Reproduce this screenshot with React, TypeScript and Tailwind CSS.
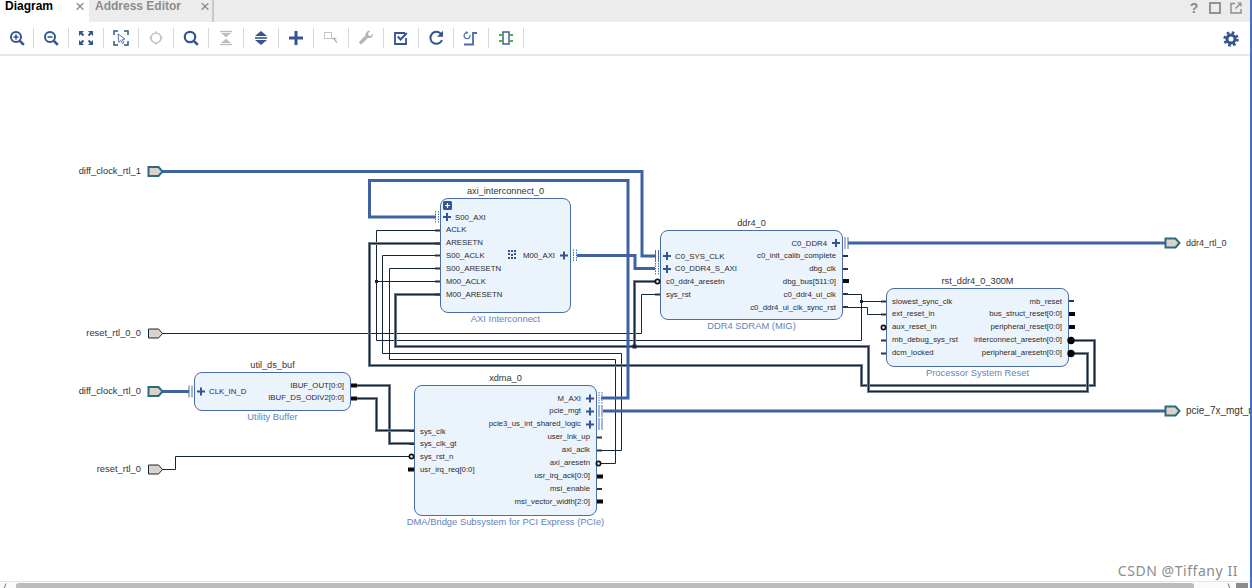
import React from "react";

type Row = { t: string; i?: boolean };
const BLUE = "#34558f";
const WIRE = "#3f62a3";
const DARK = "#14263a";

function Rows({ rows, side, cls }: { rows: Row[]; side: "l" | "r"; cls: string }) {
  return (
    <div className={`flex flex-none flex-col ${side === "r" ? "items-end" : "w-0 items-start"} ${cls}`}>
      {rows.map((r) => (
        <div
          key={r.t}
          className={`h-[12.9px] leading-[13.5px] whitespace-nowrap ${
            side === "l" ? (r.i ? "pl-[14px]" : "pl-[5px]") : r.i ? "pr-[15px]" : "pr-[6px]"
          }`}
        >
          {r.t}
        </div>
      ))}
    </div>
  );
}

function Block(props: {
  cls: string;
  title: string;
  sub: string;
  left: Row[];
  right: Row[];
  lp: string;
  rp: string;
}) {
  return (
    <div
      className={`absolute box-border flex justify-between rounded-[8px] border border-[#4a6ca8] bg-[#ebf3fd] text-[7.8px] text-[#2b2b2b] ${props.cls}`}
    >
      <div className="absolute left-0 right-0 top-[-14px] text-center text-[9.2px] leading-[12px] text-[#333]">
        {props.title}
      </div>
      <Rows rows={props.left} side="l" cls={props.lp} />
      <Rows rows={props.right} side="r" cls={props.rp} />
      <div className="absolute bottom-[-13px] left-[-20px] right-[-20px] text-center text-[9.4px] leading-[12px] text-[#6483bb]">
        {props.sub}
      </div>
    </div>
  );
}

function ExtLabel({ cls, t }: { cls: string; t: string }) {
  return <div className={`absolute whitespace-nowrap leading-[12px] text-[#333] ${cls}`}>{t}</div>;
}

const Bus = ({ d }: { d: string }) => (
  <g fill="none">
    <path d={d} stroke="#77838f" strokeWidth={3} />
    <path d={d} stroke="#14263a" strokeWidth={1.2} />
  </g>
);
const Thin = ({ d }: { d: string }) => <path d={d} fill="none" stroke={DARK} strokeWidth={1} />;
const Intf = ({ d, w = 3 }: { d: string; w?: number }) => <path d={d} fill="none" stroke={WIRE} strokeWidth={w} />;

const Plus = ({ x, y }: { x: number; y: number }) => (
  <path d={`M${x - 4} ${y}h8M${x} ${y - 4}v8`} stroke={BLUE} strokeWidth={2} fill="none" />
);
const Pin = ({ x, y, w = 5 }: { x: number; y: number; w?: number }) => <rect x={x} y={y - 1} width={w} height={2} fill="#333" />;
const BusPin = ({ x, y, w = 6 }: { x: number; y: number; w?: number }) => <rect x={x} y={y - 2} width={w} height={4} fill="#0a0a0a" />;
const Bubble = ({ x, y }: { x: number; y: number }) => (
  <circle cx={x} cy={y} r={2.1} fill="#fff" stroke="#111" strokeWidth={1.7} />
);
const Dot = ({ x, y }: { x: number; y: number }) => <circle cx={x} cy={y} r={3.7} fill="#050505" />;
const Solid = ({ x, y }: { x: number; y: number }) => (
  <path d={`M${x + 0.5} ${y - 6}v12M${x + 3.5} ${y - 6}v12`} stroke="#4a6ca8" strokeWidth={1} fill="none" />
);
const Dotted = ({ x, y }: { x: number; y: number }) => (
  <path
    d={`M${x + 0.5} ${y - 6}v12M${x + 3.5} ${y - 6}v12`}
    stroke="#3f74c0"
    strokeWidth={1}
    strokeDasharray="1.5 1"
    fill="none"
  />
);
const ExtPort = ({ x, y, thick }: { x: number; y: number; thick?: boolean }) => (
  <path
    d={`M${x} ${y - 4.5}h10l4 4.5-4 4.5h-10z`}
    fill="#dcd2cc"
    stroke={thick ? "#2f6b80" : "#14263a"}
    strokeWidth={thick ? 2 : 1}
  />
);

const Ico = ({ children }: { children: React.ReactNode }) => (
  <svg width="16" height="16" viewBox="0 0 16 16" fill="none" strokeLinecap="butt">
    {children}
  </svg>
);

const tools: React.ReactNode[] = [
  <Ico>
    <circle cx="7" cy="7" r="5" stroke={BLUE} strokeWidth="2" />
    <path d="M4.5 7h5M7 4.5v5" stroke={BLUE} strokeWidth="1.6" />
    <path d="M10.8 10.8l4 4" stroke={BLUE} strokeWidth="2.6" />
  </Ico>,
  <Ico>
    <circle cx="7" cy="7" r="5" stroke={BLUE} strokeWidth="2" />
    <path d="M4.5 7h5" stroke={BLUE} strokeWidth="1.6" />
    <path d="M10.8 10.8l4 4" stroke={BLUE} strokeWidth="2.6" />
  </Ico>,
  <Ico>
    <path d="M1 1h5L1 6zM15 1h-5l5 5zM1 15h5l-5-5zM15 15h-5l5-5z" fill={BLUE} />
    <path d="M3 3l2.5 2.5M13 3l-2.5 2.5M3 13l2.5-2.5M13 13l-2.5-2.5" stroke={BLUE} strokeWidth="2" />
  </Ico>,
  <Ico>
    <path d="M1 5V1h4M11 1h4v4M1 11v4h4M11 15h4v-4" stroke={BLUE} strokeWidth="1.5" />
    <path d="M5 4l7 5-2.8.6 1.8 3-1.4.9-1.8-3-2 1.8z" fill="#fff" stroke="#5a74a5" strokeWidth="1" />
  </Ico>,
  <Ico>
    <circle cx="8" cy="8" r="5" stroke="#c4c4c4" strokeWidth="1.6" />
    <path d="M8 1v3M8 12v3M1 8h3M12 8h3" stroke="#c4c4c4" strokeWidth="1.2" />
  </Ico>,
  <Ico>
    <circle cx="7" cy="7" r="5.2" stroke={BLUE} strokeWidth="2.2" />
    <path d="M10.8 10.8l4 4" stroke={BLUE} strokeWidth="2.6" />
  </Ico>,
  <Ico>
    <path d="M2 1.5h12" stroke="#bdbdbd" strokeWidth="1.4" />
    <path d="M3 3h10L8 7.3zM3 13h10L8 8.7z" fill="#bdbdbd" />
    <path d="M2 14.5h12" stroke="#bdbdbd" strokeWidth="1.4" />
  </Ico>,
  <Ico>
    <path d="M8 1l6 5H2zM2 10h12l-6 5z" fill={BLUE} />
    <path d="M2 8h12" stroke={BLUE} strokeWidth="1.6" />
  </Ico>,
  <Ico>
    <path d="M8 1v14M1 8h14" stroke={BLUE} strokeWidth="3" />
  </Ico>,
  <Ico>
    <rect x="1.5" y="2.5" width="7" height="6" stroke="#c4c4c4" strokeWidth="1" />
    <path d="M9 8.5h3.5l-1 1 2.5 3" stroke="#b5b5b5" strokeWidth="1.3" />
  </Ico>,
  <Ico>
    <path
      d="M15 3.6a4 4 0 0 1-5.2 4.3L4.1 13.7a1.7 1.7 0 0 1-2.4-2.4L7.5 5.6A4 4 0 0 1 12.4 1L9.8 3.6l.9 1.8 1.8.8z"
      fill="#b5b5b5"
    />
  </Ico>,
  <Ico>
    <path d="M13 8v6H2V3h10" stroke={BLUE} strokeWidth="1.8" />
    <path d="M4.8 6.5l2.8 3L13.8 3" stroke={BLUE} strokeWidth="2" />
  </Ico>,
  <Ico>
    <path d="M13.2 4.2A6 6 0 1 0 14 10" stroke={BLUE} strokeWidth="2" />
    <path d="M15 0.8v6h-6z" fill={BLUE} />
  </Ico>,
  <Ico>
    <path d="M1 14.5h9V3h4" stroke="#4a6da8" strokeWidth="1.8" />
    <path d="M4 2.6A3 3 0 1 0 7 5" stroke="#4a6da8" strokeWidth="1.2" />
    <path d="M3 1v3.2L5.4 2.6z" fill="#4a6da8" />
  </Ico>,
  <Ico>
    <rect x="5" y="2" width="6" height="12" stroke={BLUE} strokeWidth="1.4" />
    <path d="M1 5h4M11 5h4M1 11h4M11 11h4" stroke="#4caf50" strokeWidth="2" />
  </Ico>,
];

const axiL: Row[] = [
  { t: "S00_AXI", i: true },
  { t: "ACLK" },
  { t: "ARESETN" },
  { t: "S00_ACLK" },
  { t: "S00_ARESETN" },
  { t: "M00_ACLK" },
  { t: "M00_ARESETN" },
];
const ddrL: Row[] = [
  { t: "C0_SYS_CLK", i: true },
  { t: "C0_DDR4_S_AXI", i: true },
  { t: "c0_ddr4_aresetn" },
  { t: "sys_rst" },
];
const ddrR: Row[] = [
  { t: "C0_DDR4", i: true },
  { t: "c0_init_calib_complete" },
  { t: "dbg_clk" },
  { t: "dbg_bus[511:0]" },
  { t: "c0_ddr4_ui_clk" },
  { t: "c0_ddr4_ui_clk_sync_rst" },
];
const rstL: Row[] = [
  { t: "slowest_sync_clk" },
  { t: "ext_reset_in" },
  { t: "aux_reset_in" },
  { t: "mb_debug_sys_rst" },
  { t: "dcm_locked" },
];
const rstR: Row[] = [
  { t: "mb_reset" },
  { t: "bus_struct_reset[0:0]" },
  { t: "peripheral_reset[0:0]" },
  { t: "interconnect_aresetn[0:0]" },
  { t: "peripheral_aresetn[0:0]" },
];
const xdmaL: Row[] = [{ t: "sys_clk" }, { t: "sys_clk_gt" }, { t: "sys_rst_n" }, { t: "usr_irq_req[0:0]" }];
const xdmaR: Row[] = [
  { t: "M_AXI", i: true },
  { t: "pcie_mgt", i: true },
  { t: "pcie3_us_int_shared_logic", i: true },
  { t: "user_lnk_up" },
  { t: "axi_aclk" },
  { t: "axi_aresetn" },
  { t: "usr_irq_ack[0:0]" },
  { t: "msi_enable" },
  { t: "msi_vector_width[2:0]" },
];

export default function App() {
  return (
    <div className="relative box-border flex h-[588px] w-[1252px] flex-col overflow-hidden border-r-2 border-[#4472c4] bg-white [font-family:'Liberation_Sans',sans-serif]">
      {/* tabs */}
      <div className="flex h-[22px] items-stretch bg-[#ececec] text-[12px] font-bold">
        <div className="flex w-[89px] items-start bg-white pl-[5px]">
          <span className="leading-[13px] text-black">Diagram</span>
          <span className="ml-[21px] inline-block w-[12px] text-center text-[17px] font-normal leading-[20px] -mt-[3px] text-[#8a8a8a]">×</span>
        </div>
        <div className="flex w-[125px] items-start border-r-2 border-[#c8c8c8] pl-[6px]">
          <span className="leading-[13px] text-[#8c8c8c]">Address Editor</span>
          <span className="ml-[18px] inline-block w-[12px] text-center text-[17px] font-normal leading-[20px] -mt-[3px] text-[#8a8a8a]">×</span>
        </div>
        <div className="ml-auto flex items-start gap-[9px] pr-[8px] pt-[2px]">
          <span className="w-[12px] text-center text-[14px] leading-[13px] text-[#8a8a8a]">?</span>
          <svg width="12" height="12" viewBox="0 0 12 12" fill="none">
            <rect x="1" y="1" width="10" height="10" stroke="#8a8a8a" strokeWidth="1.8" />
          </svg>
          <svg width="12" height="12" viewBox="0 0 12 12" fill="none">
            <path d="M5 1.5H1v9.5h10V7" stroke="#8a8a8a" strokeWidth="1.4" />
            <path d="M5.5 6.5L11 1M7.5 1H11v3.5" stroke="#8a8a8a" strokeWidth="1.2" />
          </svg>
        </div>
      </div>
      {/* toolbar */}
      <div className="box-content flex h-[32px] items-center border-b-2 border-[#e6e6e6]">
        {tools.map((ic, i) => (
          <React.Fragment key={i}>
            <div className={`flex h-[32px] items-center justify-center ${i === 0 ? "w-[33px]" : "w-[34px]"}`}>{ic}</div>
            <div className="h-[20px] w-px bg-[#d9d9d9]" />
          </React.Fragment>
        ))}
        <div className="ml-auto pr-[11px] pt-[1px]">
          <svg width="16" height="16" viewBox="0 0 16 16" fill="none">
            <circle cx="8" cy="8" r="6.4" stroke={BLUE} strokeWidth="2.6" strokeDasharray="2.6 2.42" />
            <circle cx="8" cy="8" r="4" stroke={BLUE} strokeWidth="3" />
          </svg>
        </div>
      </div>
      {/* canvas */}
      <div className="relative flex-1 overflow-hidden bg-white text-[9.4px]">
        <ExtLabel cls="right-[1109px] top-[109px]" t="diff_clock_rtl_1" />
        <ExtLabel cls="right-[1109px] top-[271px]" t="reset_rtl_0_0" />
        <ExtLabel cls="right-[1109px] top-[329px]" t="diff_clock_rtl_0" />
        <ExtLabel cls="right-[1109px] top-[407px]" t="reset_rtl_0" />
        <ExtLabel cls="left-[1186px] top-[181px] text-[9px]" t="ddr4_rtl_0" />
        <ExtLabel cls="left-[1186px] top-[349px] text-[10px]" t="pcie_7x_mgt_rtl_0" />

        <Block
          cls="left-[440px] top-[142px] h-[115px] w-[131px]"
          title="axi_interconnect_0"
          sub="AXI Interconnect"
          left={axiL}
          right={[{ t: "M00_AXI", i: true }]}
          lp="pt-[11.5px]"
          rp="pt-[50px]"
        />
        <Block
          cls="left-[660px] top-[174px] h-[90px] w-[183px]"
          title="ddr4_0"
          sub="DDR4 SDRAM (MIG)"
          left={ddrL}
          right={ddrR}
          lp="pt-[18.5px]"
          rp="pt-[5.5px]"
        />
        <Block
          cls="left-[886px] top-[232px] h-[79px] w-[183px]"
          title="rst_ddr4_0_300M"
          sub="Processor System Reset"
          left={rstL}
          right={rstR}
          lp="pt-[5.5px]"
          rp="pt-[5.5px]"
        />
        <Block
          cls="left-[414px] top-[329px] h-[131px] w-[183px]"
          title="xdma_0"
          sub="DMA/Bridge Subsystem for PCI Express (PCIe)"
          left={xdmaL}
          right={xdmaR}
          lp="pt-[38.5px]"
          rp="pt-[5.5px]"
        />
        <Block
          cls="left-[194px] top-[316px] h-[39px] w-[157px]"
          title="util_ds_buf"
          sub="Utility Buffer"
          left={[{ t: "CLK_IN_D", i: true }]}
          right={[{ t: "IBUF_OUT[0:0]" }, { t: "IBUF_DS_ODIV2[0:0]" }]}
          lp="pt-[11.5px]"
          rp="pt-[5.5px]"
        />

        <svg className="absolute left-0 top-0" width="1250" height="525" viewBox="0 56 1250 525">
          {/* thin nets */}
          <Thin d="M162 333.5H641.5V294.5H660" />
          <Thin d="M440 230.5H376.5V340.5H861.5V294.5H843" />
          <Thin d="M861.5 301.5H886" />
          <Thin d="M440 281.5H376.5" />
          <Thin d="M843 307.5H867.5V314.5H886" />
          <Thin d="M440 255.5H382.5V353.5H621.5V450.5H597" />
          <Thin d="M440 268.5H389.5V359.5H615.5V463.5H600" />
          <Thin d="M162 469.5H175.5V456.5H412" />
          {/* bus nets */}
          <Bus d="M440 243.5H369.5V365.5H861.5V385.5H1094.5V340.5H1072" />
          <Bus d="M440 294.5H395.5V346.5H868.5V391.5H1087.5V353.5H1072" />
          <Bus d="M660 281.5H634.5V346.5" />
          <Bus d="M352 385.5H389.5V443.5H414" />
          <Bus d="M352 398.5H376.5V430.5H414" />
          {/* interface nets */}
          <Intf d="M160 171.5H642V256H655" />
          <Intf d="M436 217H369.5V180.5H628V398H601" />
          <Intf d="M577 255.5H635V268.5H655" />
          <Intf d="M848 243H1166" />
          <Intf d="M162 391.5H189" />
          <Intf d="M603 411H1166" />
          {/* junctions */}
          <rect x="375" y="280" width="3" height="3" fill={DARK} />
          <rect x="860" y="300" width="3" height="3" fill={DARK} />
          <rect x="632.5" y="344.5" width="4" height="4" fill={DARK} />
          {/* ext ports */}
          <ExtPort x={148.5} y={171.5} thick />
          <ExtPort x={148.5} y={333.5} />
          <ExtPort x={148.5} y={391.5} thick />
          <ExtPort x={148.5} y={469.5} />
          <ExtPort x={1165.5} y={243} thick />
          <ExtPort x={1165.5} y={411} thick />
          {/* axi */}
          <rect x="443" y="201" width="9" height="9" rx="1.5" fill={BLUE} />
          <path d="M445 205.5h5M447.5 203v5" stroke="#fff" strokeWidth="1.2" />
          <Dotted x={435} y={217} />
          <Plus x={447} y={217} />
          {[230.5, 243.5, 255.5, 268.5, 281.5, 294.5].map((y) => (
            <Pin key={y} x={435} y={y} />
          ))}
          <Plus x={564} y={255.5} />
          <Dotted x={573} y={255.5} />
          <g fill={BLUE}>
            {[
              [508, 250],
              [511, 250],
              [514, 250],
              [508, 253],
              [514, 253],
              [511, 254],
              [508, 257],
              [511, 257],
              [514, 257],
            ].map(([x, y], k) => (
              <rect key={k} x={x} y={y} width="2" height="2" />
            ))}
          </g>
          {/* ddr */}
          <Solid x={655} y={256} />
          <Dotted x={655} y={269} />
          <Plus x={667} y={256} />
          <Plus x={667} y={269} />
          <Bubble x={657.5} y={281.5} />
          <Pin x={655} y={294.5} />
          <Plus x={836} y={243} />
          <Solid x={844.5} y={243} />
          <Pin x={843} y={256} />
          <Pin x={843} y={269} />
          <BusPin x={843} y={281} />
          <Pin x={843} y={294} />
          <Pin x={843} y={307} />
          {/* rst */}
          <Pin x={881} y={301.5} />
          <Pin x={881} y={314.5} />
          <Bubble x={883.5} y={327.5} />
          <Pin x={881} y={340.5} />
          <Pin x={881} y={353.5} />
          <Pin x={1069} y={301} />
          <BusPin x={1069} y={314} />
          <BusPin x={1069} y={327} />
          <Dot x={1071} y={340.5} />
          <Dot x={1071} y={353.5} />
          {/* xdma */}
          <Plus x={590} y={398.5} />
          <Plus x={590} y={411.5} />
          <Plus x={590} y={424.5} />
          <Dotted x={598.5} y={398} />
          <Solid x={598.5} y={411} />
          <Solid x={598.5} y={424} />
          <Pin x={597} y={437.5} />
          <Pin x={597} y={450.5} />
          <Bubble x={598.5} y={463.5} />
          <BusPin x={597} y={476.5} />
          <Pin x={597} y={489} />
          <BusPin x={597} y={501.5} />
          <Pin x={409} y={431} />
          <Pin x={409} y={444} />
          <Bubble x={411.5} y={456.5} />
          <BusPin x={408} y={469.5} />
          {/* util */}
          <Solid x={188.5} y={391.5} />
          <Plus x={201} y={391.5} />
          <BusPin x={351} y={385.5} />
          <BusPin x={351} y={398.5} />
        </svg>

        <div className="absolute right-[12px] top-[507px] text-[14px] leading-[16px] tracking-[0.55px] text-[#8c8c8c] [font-family:'Noto_Sans',sans-serif]">
          CSDN @Tiffany II
        </div>
      </div>
      {/* scrollbar */}
      <div className="flex h-[7px] items-start border-t border-[#e4e4e4] bg-[#fafafa] pt-px">
        <svg className="ml-[3px] mr-[9px]" width="4" height="6" viewBox="0 0 4 6" fill="none">
          <path d="M3 0.5L1 5.5" stroke="#777" strokeWidth="1" />
        </svg>
        <div className="h-[6px] w-[1178px] rounded-t-[3px] bg-[#bcbcbc]" />
        <svg className="ml-[33px] mr-[5px]" width="4" height="6" viewBox="0 0 4 6" fill="none">
          <path d="M1 0.5L3 5.5" stroke="#777" strokeWidth="1" />
        </svg>
        <div className="h-[6px] w-[12px] bg-[#8a8a8a]" />
      </div>
    </div>
  );
}
